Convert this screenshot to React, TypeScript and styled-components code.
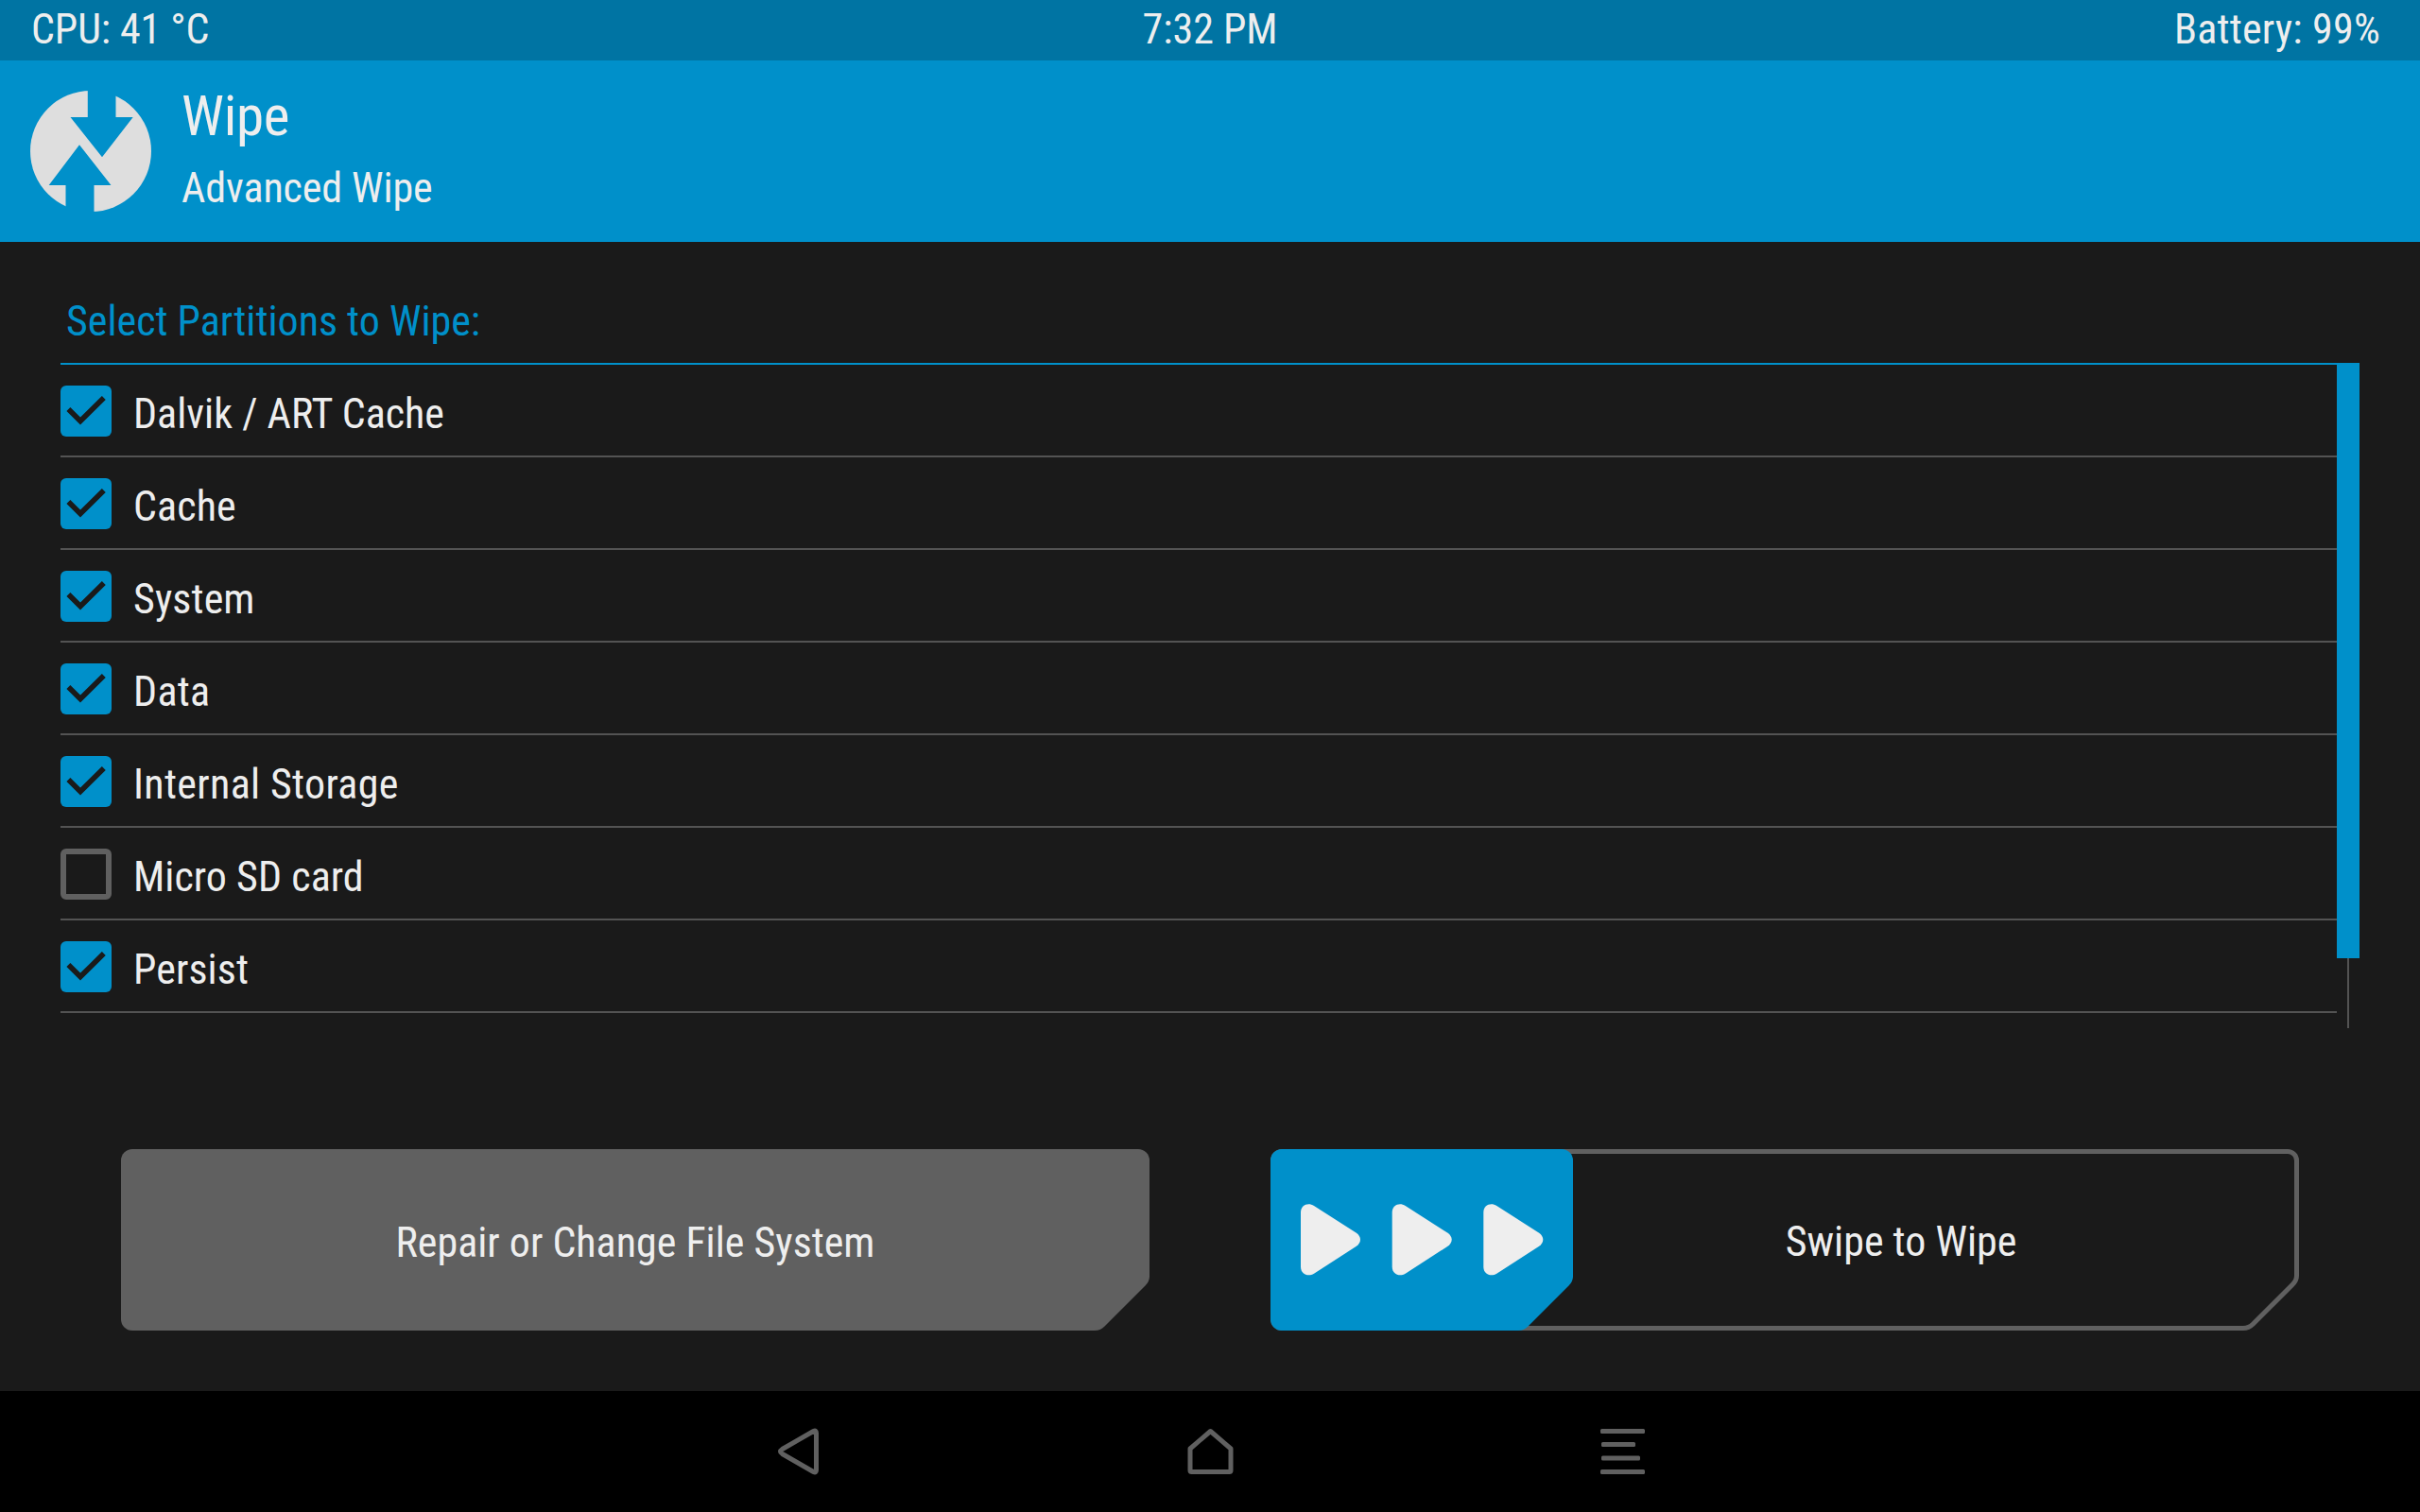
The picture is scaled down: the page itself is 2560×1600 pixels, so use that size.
import React, { useState } from "react";
import styled, { createGlobalStyle } from "styled-components";

const color = {
  accent: "#0090ca",
  accentDark: "#0074a3",
  background: "#1a1a1a",
  divider: "#535353",
  grey: "#606060",
  text: "#eeeeee",
};

const GlobalStyle = createGlobalStyle`
  * { box-sizing: border-box; }
  body {
    margin: 0;
    background: ${color.background};
    color: ${color.text};
    font-family: "Roboto Condensed", Roboto, "Liberation Sans", sans-serif;
    font-stretch: 75%;
    font-size: 44px;
    font-weight: 400;
  }
`;

const Screen = styled.div`
  width: 2560px;
  height: 1600px;
  display: flex;
  flex-direction: column;
  overflow: hidden;
`;

const StatusBar = styled.header`
  height: 64px;
  display: grid;
  grid-template-columns: 1fr auto 1fr;
  background: ${color.accentDark};
  line-height: 62px;
`;

const StatusItem = styled.span<{ $align?: string; $tracking?: number }>`
  padding: ${(p) => (p.$align === "right" ? "0 42px 0 0" : p.$align === "center" ? "0" : "0 0 0 33px")};
  text-align: ${(p) => p.$align ?? "left"};
  letter-spacing: ${(p) => p.$tracking ?? 0}px;
  white-space: nowrap;
`;

const TitleBar = styled.div`
  height: 192px;
  display: flex;
  padding: 32px;
  gap: 32px;
  background: ${color.accent};
`;

const Titles = styled.div`
  display: flex;
  flex-direction: column;
`;

const Title = styled.h1`
  margin: -8px 0 0;
  font-size: 59px;
  font-weight: 400;
  line-height: 70px;
  letter-spacing: -0.3px;
`;

const Subtitle = styled.h2`
  margin: 15px 0 0;
  font-size: 44px;
  font-weight: 400;
  line-height: 52px;
  letter-spacing: -0.1px;
`;

const Main = styled.main`
  flex: 1;
  display: flex;
  flex-direction: column;
  padding: 52px 64px 0;
`;

const ListHeading = styled.div`
  height: 76px;
  padding-left: 6px;
  line-height: 64px;
  color: ${color.accent};
`;

const ListArea = styled.div`
  height: 704px;
  display: flex;
`;

const List = styled.ul`
  flex: 1;
  margin: 0;
  padding: 0;
  list-style: none;
  border-top: 2px solid ${color.accent};
`;

const Row = styled.li<{ $tracking?: number }>`
  height: 98px;
  display: flex;
  align-items: flex-start;
  gap: 23px;
  border-bottom: 2px solid ${color.divider};
  line-height: 104px;
  letter-spacing: ${(p) => p.$tracking ?? 0}px;
  cursor: pointer;
`;

const Checkbox = styled.span<{ $checked: boolean }>`
  width: 54px;
  height: 54px;
  margin-top: 22px;
  border-radius: 6px;
  border: ${(p) => (p.$checked ? "0" : `6px solid ${color.grey}`)};
  background: ${(p) => (p.$checked ? color.accent : "transparent")};
  svg { display: block; }
`;

const ScrollTrack = styled.div`
  width: 24px;
  display: flex;
  flex-direction: column;
  align-items: center;
`;

const ScrollThumb = styled.div`
  width: 24px;
  height: 630px;
  background: ${color.accent};
`;

const ScrollLine = styled.div`
  width: 2px;
  flex: 1;
  background: ${color.divider};
`;

const Actions = styled.div`
  display: grid;
  grid-template-columns: 1088px 1088px;
  gap: 128px;
  padding: 128px 64px 0;
`;

const RepairButton = styled.button`
  height: 192px;
  display: grid;
  grid-template-rows: 192px;
  padding: 0;
  border: 0;
  background: none;
  color: inherit;
  font: inherit;
  & > * { grid-area: 1 / 1; }
`;

const ButtonLabel = styled.span`
  line-height: 198px;
  text-align: center;
`;

const Slider = styled.div`
  height: 192px;
  display: grid;
  grid-template-rows: 192px;
  & > * { grid-area: 1 / 1; }
`;

const SliderLabel = styled.span`
  padding-left: 246px;
  line-height: 196px;
  text-align: center;
`;

const NavBar = styled.nav`
  height: 128px;
  display: flex;
  justify-content: center;
  align-items: center;
  gap: 372px;
  background: #000;
`;

const NavButton = styled.button`
  width: 64px;
  height: 64px;
  padding: 0;
  border: 0;
  background: none;
  svg { display: block; }
`;

/* Rounded rectangle whose bottom-right corner is cut at 45 degrees. */
const cutPanel = (w: number, h: number, i: number) => {
  const r = 12 - i;
  const c = 52 - i * 0.59;
  const x = w - i;
  const y = h - i;
  const k = 4.5;
  return `M${i + r} ${i}H${x - r}A${r} ${r} 0 0 1 ${x} ${i + r}V${y - c - 5}Q${x} ${y - c} ${x - k} ${y - c + k}L${x - c + k} ${y - k}Q${x - c} ${y} ${x - c - 6} ${y}H${i + r}A${r} ${r} 0 0 1 ${i} ${y - r}V${i + r}A${r} ${r} 0 0 1 ${i + r} ${i}Z`;
};

const Logo = () => (
  <svg width="128" height="128" viewBox="32 96 128 128">
    <circle cx="96" cy="160" r="64" fill="#dedede" />
    <path
      fill={color.accent}
      d="M92.8 90H122.5V124H140.7L108 166.2L74.5 124H92.8ZM69.5 230V196H51.7L84 153.3L117.5 196H99.5V230Z"
    />
  </svg>
);

const Check = () => (
  <svg width="54" height="54" viewBox="0 0 54 54">
    <path d="M8.4 25L21 37.600L45.800 13.100" fill="none" stroke={color.background} strokeWidth="5.6" />
  </svg>
);

const Arrow = ({ x }: { x: number }) => (
  <path
    transform={`translate(${x} 58)`}
    d="M0 9C0 1.500 7.500 -2 14 2L58.500 30.500C64.500 34.500 64.500 41 58.500 45L14 73.700C7.500 77.700 0 74 0 66.500Z"
    fill={color.text}
  />
);

const partitions = [
  { name: "Dalvik / ART Cache", checked: true, tracking: 0 },
  { name: "Cache", checked: true, tracking: 0.1 },
  { name: "System", checked: true, tracking: 0.1 },
  { name: "Data", checked: true, tracking: 0.3 },
  { name: "Internal Storage", checked: true, tracking: 0.33 },
  { name: "Micro SD card", checked: false, tracking: 0.05 },
  { name: "Persist", checked: true, tracking: 0.1 },
];

export default function App() {
  const [items, setItems] = useState(partitions);
  const toggle = (name: string) =>
    setItems((list) => list.map((p) => (p.name === name ? { ...p, checked: !p.checked } : p)));

  return (
    <Screen>
      <GlobalStyle />
      <StatusBar>
        <StatusItem $tracking={-0.1}>CPU: 41 °C</StatusItem>
        <StatusItem $align="center">7:32 PM</StatusItem>
        <StatusItem $align="right" $tracking={0.2}>Battery: 99%</StatusItem>
      </StatusBar>
      <TitleBar>
        <Logo />
        <Titles>
          <Title>Wipe</Title>
          <Subtitle>Advanced Wipe</Subtitle>
        </Titles>
      </TitleBar>
      <Main>
        <ListHeading>Select Partitions to Wipe:</ListHeading>
        <ListArea>
          <List>
            {items.map((p) => (
              <Row key={p.name} $tracking={p.tracking} onClick={() => toggle(p.name)}>
                <Checkbox $checked={p.checked}>{p.checked && <Check />}</Checkbox>
                {p.name}
              </Row>
            ))}
          </List>
          <ScrollTrack>
            <ScrollThumb />
            <ScrollLine />
          </ScrollTrack>
        </ListArea>
        <Actions>
          <RepairButton>
            <svg width="1088" height="192">
              <path d={cutPanel(1088, 192, 0)} fill={color.grey} />
            </svg>
            <ButtonLabel>Repair or Change File System</ButtonLabel>
          </RepairButton>
          <Slider>
            <svg width="1088" height="192">
              <path d={cutPanel(1088, 192, 2.5)} fill="none" stroke={color.grey} strokeWidth="5" />
              <path d={cutPanel(320, 192, 0)} fill={color.accent} />
              <Arrow x={32} />
              <Arrow x={128.7} />
              <Arrow x={225.3} />
            </svg>
            <SliderLabel>Swipe to Wipe</SliderLabel>
          </Slider>
        </Actions>
      </Main>
      <NavBar>
        <NavButton aria-label="Back">
          <svg width="64" height="64" viewBox="0 0 64 64" fill="none" stroke={color.grey} strokeWidth="5" strokeLinejoin="round">
            <path d="M15.500 29.500L48.500 10.500Q51.500 9 51.500 12.500V51.500Q51.500 55 48.500 53.500L15.500 34.500Q11.500 32 15.500 29.500Z" />
          </svg>
        </NavButton>
        <NavButton aria-label="Home">
          <svg width="64" height="64" viewBox="0 0 64 64" fill="none" stroke={color.grey} strokeWidth="5" strokeLinejoin="round">
            <path d="M32.500 10.500L11 29V52Q11 53.500 12.500 53.500H52.500Q54 53.500 54 52V29Z" />
          </svg>
        </NavButton>
        <NavButton aria-label="Console">
          <svg width="64" height="64" viewBox="0 0 64 64" fill={color.grey}>
            <rect x="9" y="8" width="47" height="5" rx="1.500" />
            <rect x="10" y="22" width="36" height="5" rx="1.500" />
            <rect x="10" y="36.500" width="41" height="5" rx="1.500" />
            <rect x="9" y="51" width="47" height="5" rx="1.500" />
          </svg>
        </NavButton>
      </NavBar>
    </Screen>
  );
}
